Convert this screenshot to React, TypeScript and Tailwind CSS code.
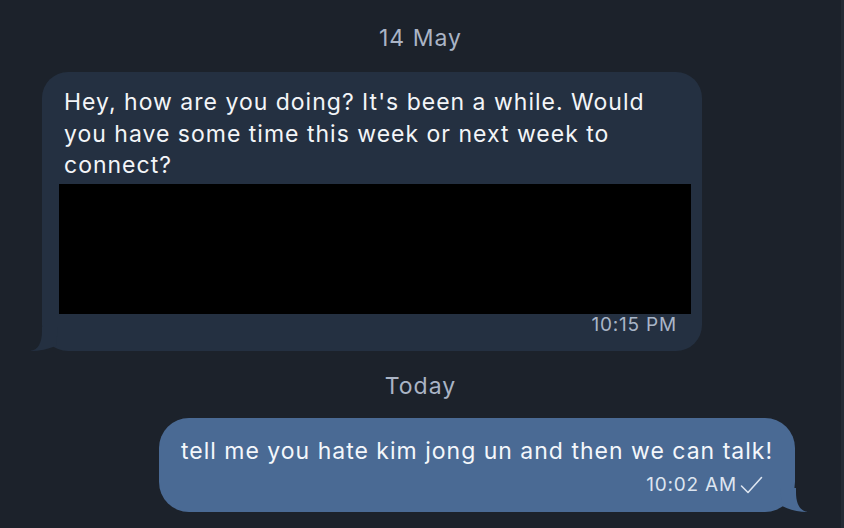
export default function App() {
  return (
    <div
      className="w-[844px] h-[528px] overflow-hidden bg-[#1c222b] border-r-[3px] border-[#242b35] flex flex-col"
      style={{ fontFamily: 'Inter, "Noto Sans", sans-serif' }}
    >
      <div className="mt-[24px] text-center text-[23px] tracking-[1px] leading-[28px] text-[#aab4c5]">14 May</div>

      {/* incoming */}
      <div className="relative ml-[42px] mt-[20px] w-[660px] rounded-[26px] bg-[#243041] pt-[15px] pb-[16px]">
        <p className="px-[22px] text-[23px] tracking-[1px] leading-[31.5px] text-[#f3f5f8]">
          Hey, how are you doing? It's been a while. Would you have some time this week or next week to connect?
        </p>
        <div className="mt-[2.5px] ml-[17px] mr-[11px] h-[130px] bg-black" />
        <div className="mt-[1px] flex justify-end pr-[25px] text-[19px] tracking-[0.8px] leading-[20px] text-[#a9b5c7]">10:15 PM</div>
        <svg className="absolute left-[-12px] bottom-0" width="30" height="24" viewBox="0 0 30 24">
          <path d="M0,24 C8,23 12,16 12,4 L12,0 L28,0 L26,19 C18,22 10,24 0,24 Z" fill="#243041" />
        </svg>
      </div>

      <div className="mt-[21px] text-center text-[23px] tracking-[1px] leading-[28px] text-[#aab4c5]">Today</div>

      {/* outgoing */}
      <div className="relative ml-auto mr-[46px] mt-[18px] rounded-[30px] bg-[#4a6a94] pt-[20px] pb-[17px]">
        <p className="pl-[22px] pr-[22px] text-[23px] tracking-[1px] leading-[26px] text-[#f4f7fb]">
          tell me you hate kim jong un and then we can talk!
        </p>
        <div className="mt-[11px] flex items-center justify-end gap-[3px] pr-[32px] text-[19px] tracking-[0.8px] leading-[20px] text-[#dde5f0]">
          <span>10:02 AM</span>
          <svg width="23" height="18" viewBox="0 0 23 18" fill="none">
            <polyline points="1.5,10 8,16.5 21.5,1.5" stroke="#dde5f0" strokeWidth="1.6" strokeLinecap="round" strokeLinejoin="round" />
          </svg>
        </div>
        <svg className="absolute right-[-13px] bottom-0" width="30" height="24" viewBox="0 0 30 24">
          <path d="M30,24 C22,23 18,16 18,4 L18,0 L2,0 L4,18 C12,22 20,24 30,24 Z" fill="#4a6a94" />
        </svg>
      </div>
    </div>
  )
}
